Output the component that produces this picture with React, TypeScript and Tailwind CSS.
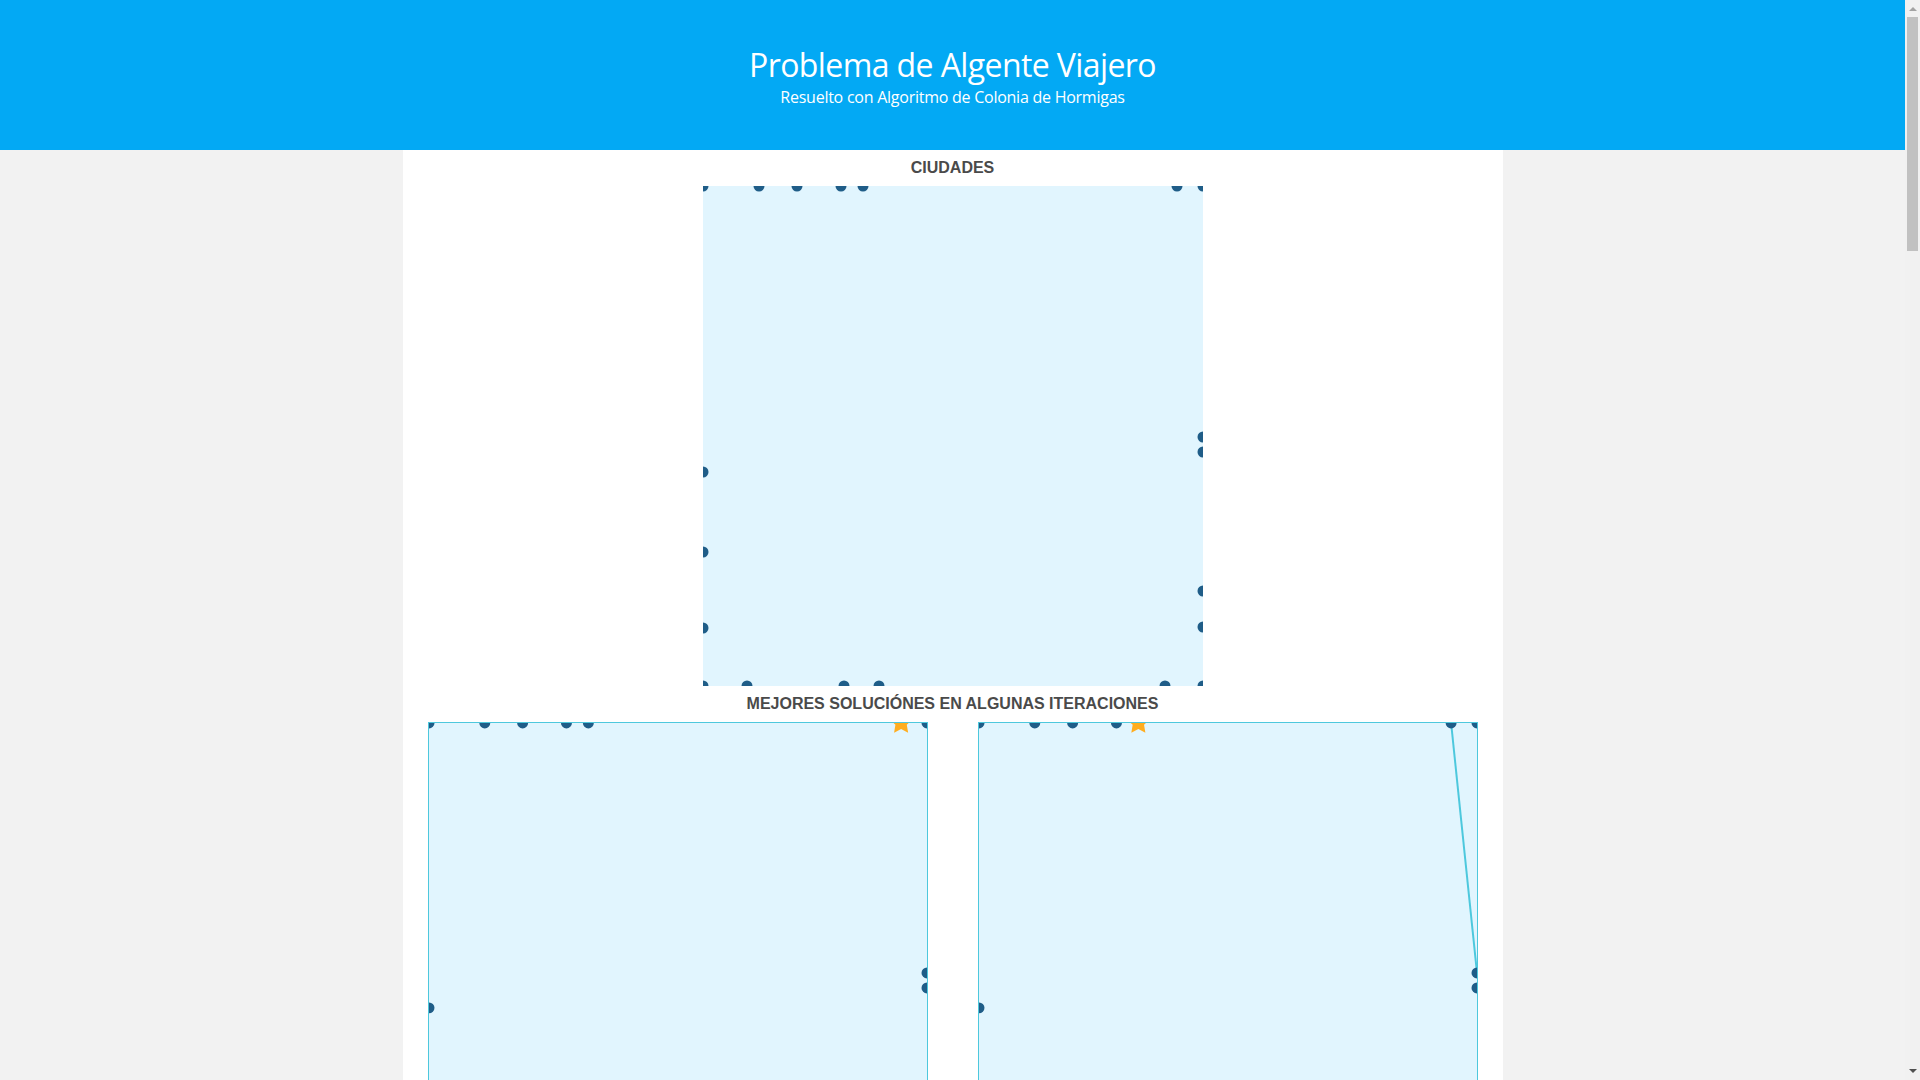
const CITIES: [number, number][] = [
  [0, 0], [56, 0], [94, 0], [138, 0], [160, 0], [474, 0], [500, 0],
  [0, 500], [44, 500], [141, 500], [176, 500], [462, 500], [500, 500],
  [0, 286], [0, 366], [0, 442],
  [500, 251], [500, 266], [500, 405], [500, 441],
];

type Solution = { start: [number, number]; path: [number, number][] };

const SOLUTIONS: Solution[] = [
  { start: [474, 0], path: [] },
  { start: [160, 0], path: [[474, 0], [500, 251]] },
  { start: [56, 0], path: [] },
  { start: [138, 0], path: [[0, 286], [0, 366]] },
  { start: [474, 0], path: [] },
  { start: [94, 0], path: [] },
  { start: [0, 442], path: [] },
  { start: [500, 405], path: [] },
  { start: [176, 500], path: [] },
  { start: [44, 500], path: [] },
  { start: [160, 0], path: [] },
  { start: [462, 500], path: [] },
  { start: [500, 266], path: [] },
  { start: [141, 500], path: [] },
  { start: [0, 366], path: [] },
  { start: [56, 0], path: [] },
];

function star(cx: number, cy: number, r: number) {
  const pts: string[] = [];
  for (let i = 0; i < 10; i++) {
    const rad = i % 2 === 0 ? r : r * 0.5;
    const a = -Math.PI / 2 + (i * Math.PI) / 5;
    pts.push(`${cx + rad * Math.cos(a)},${cy + rad * Math.sin(a)}`);
  }
  return pts.join(" ");
}

function CityMap({ solution }: { solution?: Solution }) {
  return (
    <svg viewBox="0 0 500 500" className="block h-full w-full">
      {solution && solution.path.length > 1 && (
        <polyline
          points={solution.path.map(([x, y]) => `${x},${y}`).join(" ")}
          fill="none"
          stroke="#4dc8dd"
          strokeWidth={2}
        />
      )}
      {CITIES.map(([x, y]) =>
        solution && solution.start[0] === x && solution.start[1] === y ? null : (
          <circle key={`${x}-${y}`} cx={x} cy={y} r={5.5} fill="#1f5d88" />
        ),
      )}
      {solution && <polygon points={star(solution.start[0], solution.start[1], 12)} fill="#ffad1f" />}
    </svg>
  );
}

function Heading({ children }: { children: string }) {
  return (
    <h2 className="h-9 text-center font-['Liberation_Sans',Arial,sans-serif] text-base font-bold leading-9 text-[#4a4a4a]">
      {children}
    </h2>
  );
}

// classic browser scrollbar, as seen in the capture
function Scrollbar() {
  return (
    <div className="sticky top-0 flex h-screen w-[15px] shrink-0 flex-col bg-[#f1f1f1]">
      <div className="flex h-[17px] items-center justify-center">
        <svg width="8" height="5" viewBox="0 0 8 5">
          <polygon points="0,5 4,1 8,5" fill="#a3a3a3" />
        </svg>
      </div>
      <div className="h-[234px] px-[2px]">
        <div className="h-full bg-[#c1c1c1]" />
      </div>
      <div className="flex-1" />
      <div className="flex h-[17px] items-center justify-center">
        <svg width="8" height="5" viewBox="0 0 8 5">
          <polygon points="0,0 8,0 4,4" fill="#505050" />
        </svg>
      </div>
    </div>
  );
}

export default function App() {
  return (
    <div className="flex items-start bg-[#f2f2f2]">
      <div className="min-w-0 flex-1">
        <header className="h-[150px] bg-[#03a9f4] pt-[45px] text-center font-['Open_Sans',sans-serif] text-white">
          <h1 className="text-[32px] leading-[40px] tracking-[-0.6px]">Problema de Algente Viajero</h1>
          <p className="text-base leading-6 tracking-[-0.25px]">Resuelto con Algoritmo de Colonia de Hormigas</p>
        </header>

        <main className="mx-auto w-[1100px] bg-white pb-[25px]">
          <Heading>CIUDADES</Heading>
          <div className="mx-auto h-[500px] w-[500px] bg-[#e1f5fe]">
            <CityMap />
          </div>

          <Heading>MEJORES SOLUCIÓNES EN ALGUNAS ITERACIONES</Heading>
          <div className="grid grid-cols-2 gap-y-[10px]">
            {SOLUTIONS.map((s, i) => (
              <div key={i} className="flex justify-center">
                <div className="h-[500px] w-[500px] border border-[#4dc8dd] bg-[#e1f5fe]">
                  <CityMap solution={s} />
                </div>
              </div>
            ))}
          </div>
        </main>
      </div>
      <Scrollbar />
    </div>
  );
}
